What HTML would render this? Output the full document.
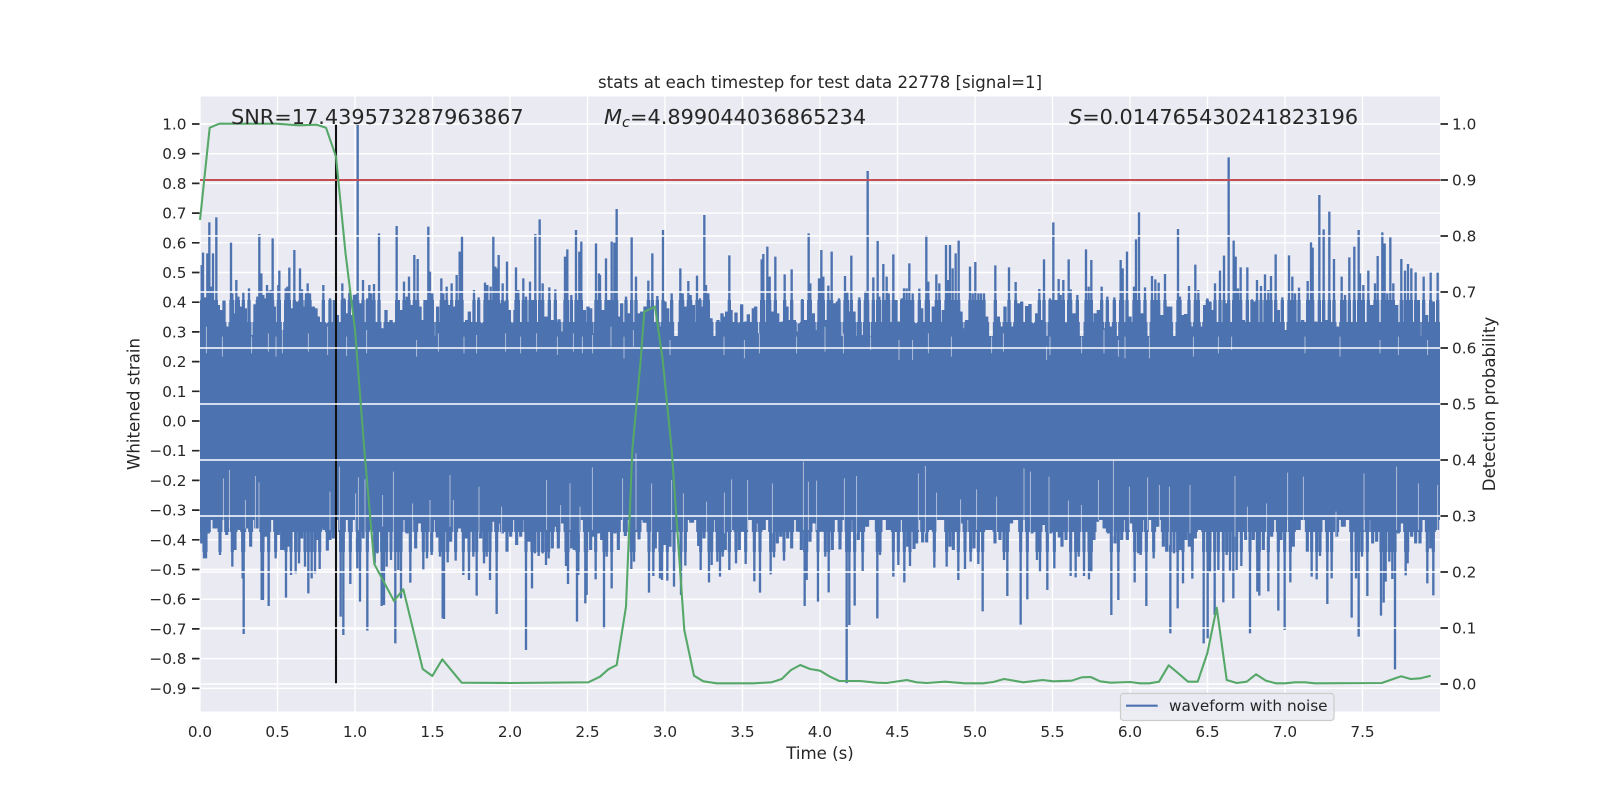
<!DOCTYPE html>
<html><head><meta charset="utf-8"><title>stats</title>
<style>
html,body{margin:0;padding:0;background:#fff;width:1600px;height:800px;overflow:hidden}
svg{display:block}
text{font-family:"DejaVu Sans","Liberation Sans",sans-serif;fill:#262626}
.t{font-size:15.28px}
.l{font-size:16.6px}
.b{font-size:20.83px}
</style></head><body>
<svg width="1600" height="800" viewBox="0 0 1600 800" xmlns="http://www.w3.org/2000/svg">
<defs>
<clipPath id="c"><rect x="200" y="96.5" width="1240" height="615"/></clipPath>
<clipPath id="t1"><rect x="200" y="300" width="1240" height="60"/></clipPath>
<clipPath id="t2"><rect x="200" y="322" width="1240" height="40"/></clipPath>
<clipPath id="b1"><rect x="200" y="500" width="1240" height="52"/></clipPath>
<clipPath id="b2"><rect x="200" y="500" width="1240" height="32"/></clipPath>
<g id="sp" fill="none" stroke="#4c72b0">
<path transform="translate(100,60) scale(.33333)" d="M305 900V615M309 900V578M315 900V712M322 900V580M328 900V487M333 900V680M339 900V580M345 900V735M349 900V472M355 900V735M362 900V750M372 900V722M380 900V800M386 900V830M393 900V548M397 900V700M403 900V760M409 900V660M415 900V710M423 900V740M430 900V695M436 900V745M447 900V685M453 900V825M459 900V870M465 900V733M472 900V710M478 900V522M484 900V640M490 900V705M495 900V715M501 900V675M508 900V692M513 900V690M518 900V535M523 900V740M530 900V830M535 900V675M538 900V632M545 900V810M550 900V820M557 900V685M562 900V680M568 900V623M575 900V745M583 900V570M590 900V725M600 900V625M606 900V688M612 900V740M618 900V700M623 900V670M630 900V700M640 900V740M648 900V745M655 900V770M662 900V835M670 900V675M677 900V790M683 900V880M690 900V715M697 900V800M703 900V720M712 900V765M720 900V850M727 900V670M733 900V715M740 900V760M748 900V692M755 900V765M762 900V705M767 900V703M773 900V195M780 900V730M789 900V660M795 900V820M802 900V715M808 900V675M814 900V700M822 900V672M828 900V800M837 900V520M845 900V805M852 900V820M858 900V750M866 900V810M873 900V780M880 900V790M890 900V498M895 900V720M905 900V750M912 900V665M920 900V710M927 900V650M935 900V735M943 900V585M953 900V597M960 900V740M968 900V780M975 900V720M985 900V500M990 900V635M997 900V700M1005 900V830M1013 900V740M1024 900V655M1030 900V700M1040 900V680M1048 900V735M1055 900V670M1063 900V740M1070 900V645M1079 900V575M1086 900V527M1093 900V830M1100 900V780M1108 900V755M1115 900V790M1122 900V690M1130 900V800M1136 900V712M1145 900V790M1155 900V668M1162 900V675M1172 900V680M1180 900V530M1186 900V620M1190 900V625M1196 900V585M1203 900V730M1208 900V670M1214 900V725M1221 900V605M1228 900V750M1236 900V790M1245 900V750M1248 900V622M1255 900V690M1262 900V800M1270 900V655M1278 900V710M1290 900V665M1300 900V720M1306 900V522M1319 900V478M1328 900V670M1338 900V770M1348 900V682M1358 900V780M1366 900V688M1377 900V778M1385 900V815M1395 900V590M1402 900V568M1414 900V705M1428 900V510M1438 900V575M1444 900V545M1453 900V750M1464 900V740M1472 900V745M1480 900V820M1488 900V550M1497 900V640"/>
<path transform="translate(600,60) scale(.33333)" d="M0 900V645M8 900V750M18 900V595M25 900V720M35 900V545M43 900V548M50 900V447M58 900V770M65 900V730M78 900V710M86 900V760M95 900V532M102 900V800M108 900V650M116 900V760M125 900V755M135 900V740M145 900V662M150 900V740M157 900V580M165 900V790M172 900V708M180 900V800M189 900V510M195 900V725M203 900V745M215 900V700M224 900V830M232 900V832M241 900V625M248 900V700M258 900V740M265 900V663M272 900V705M280 900V735M291 900V647M300 900V715M307 900V740M313 900V465M318 900V675M325 900V700M333 900V775M340 900V835M347 900V835M354 900V780M360 900V830M366 900V760M375 900V770M380 900V755M388 900V586M393 900V750M408 900V758M415 900V790M425 900V733M437 900V785M445 900V763M453 900V860M460 900V745M467 900V740M477 900V820M485 900V598M490 900V582M502 900V560M509 900V650M518 900V755M526 900V590M533 900V760M540 900V845M548 900V785M554 900V643M561 900V740M567 900V780M575 900V628M583 900V780M590 900V815M600 900V790M607 900V717M617 900V780M626 900V520M631 900V670M640 900V760M650 900V810M657 900V655M664 900V570M670 900V650M677 900V780M685 900V677M695 900V575M705 900V730M712 900V725M717 900V715M725 900V850M735 900V648M742 900V695M748 900V755M754 900V587M762 900V755M770 900V850M778 900V712M788 900V825M796 900V693M803 900V333M812 900V830M820 900V652M833 900V543M838 900V710M850 900V612M860 900V650M866 900V700M880 900V583M888 900V720M895 900V785M905 900V715M912 900V685M920 900V685M928 900V610M938 900V700M948 900V790M958 900V686M965 900V745M971 900V820M979 900V525M985 900V665M993 900V830M1000 900V740M1009 900V643M1018 900V670M1030 900V750M1038 900V555M1043 900V660M1050 900V555M1058 900V625M1067 900V580M1076 900V542M1083 900V755M1092 900V805M1100 900V780M1110 900V620M1118 900V700M1126 900V606M1135 900V700M1143 900V700M1152 900V700M1160 900V770M1170 900V855M1186 900V616M1195 900V770M1205 900V800M1215 900V740M1227 900V622M1235 900V800M1247 900V666M1255 900V730M1265 900V725M1280 900V738M1290 900V732M1300 900V790M1310 900V760M1318 900V687M1325 900V780M1332 900V598M1340 900V860M1350 900V715M1360 900V487M1367 900V720M1376 900V657M1382 900V705M1390 900V660M1397 900V790M1406 900V598M1412 900V688M1422 900V760M1432 900V705M1445 900V830M1458 900V568M1466 900V680M1474 900V600M1485 900V760M1495 900V750"/>
<path transform="translate(1050,60) scale(.33333)" d="M155 900V680M163 900V805M172 900V710M184 900V800M193 900V712M203 900V850M212 900V600M218 900V625M231 900V575M240 900V770M252 900V680M258 900V538M267 900V457M276 900V760M285 900V682M295 900V830M306 900V648M316 900V658M326 900V668M335 900V765M345 900V642M352 900V740M362 900V740M372 900V830M384 900V507M390 900V710M400 900V765M407 900V762M417 900V678M425 900V800M436 900V614M445 900V690M455 900V800M464 900V735M472 900V715M480 900V725M488 900V750M495 900V670M510 900V632M522 900V587M530 900V730M536 900V292M544 900V820M551 900V542M557 900V590M564 900V685M572 900V622M580 900V780M592 900V622M600 900V800M606 900V718M614 900V725M621 900V660M633 900V678M645 900V643M655 900V690M663 900V648M677 900V583M685 900V750M697 900V712M705 900V810M717 900V586M727 900V650M735 900V700M747 900V683M758 900V780M773 900V663M783 900V547M788 900V563M797 900V785M808 900V405M821 900V508M830 900V780M838 900V455M852 900V597M860 900V800M875 900V650M885 900V705M898 900V592M905 900V820M913 900V560M926 900V510M930 900V640M940 900V675M955 900V632M965 900V735M975 900V670M983 900V588M997 900V517M1004 900V550M1012 900V700M1021 900V532M1030 900V670M1040 900V735M1054 900V597M1065 900V632M1074 900V612M1084 900V625M1097 900V637M1105 900V720M1121 900V650M1130 900V765M1142 900V638M1150 900V725M1163 900V638"/>
<path transform="translate(100,450) scale(.33333)" d="M305 180V280M312 180V325M318 180V325M325 180V250M335 180V205M345 180V235M352 180V230M360 180V315M380 180V255M390 180V190M397 180V350M405 180V300M415 180V240M428 180V385M431 180V552M442 180V235M452 180V290M470 180V235M485 180V450M489 180V450M497 180V260M506 180V468M527 180V325M535 180V255M545 180V300M552 180V300M558 180V443M566 180V290M573 180V375M580 180V220M587 180V370M597 180V340M605 180V265M615 180V350M625 180V430M635 180V385M645 180V370M652 180V270M659 180V357M667 180V235M675 180V240M682 180V302M690 180V270M700 180V265M722 180V500M730 180V555M740 180V200M751 180V402M760 180V190M772 180V355M780 180V455M790 180V265M802 180V542M812 180V240M824 180V340M832 180V310M845 180V468M852 180V465M860 180V350M873 180V330M886 180V580M895 180V360M903 180V445M912 180V200M921 180V250M931 180V398M947 180V295M955 180V220M970 180V358M981 180V325M995 180V315M1003 180V210M1012 180V262M1020 180V320M1028 180V505M1032 180V507M1043 180V337M1052 180V275M1067 180V332M1077 180V235M1090 180V375M1098 180V265M1107 180V390M1115 180V215M1120 180V320M1130 180V437M1142 180V265M1152 180V340M1160 180V320M1170 180V390M1180 180V215M1190 180V492M1198 180V220M1207 180V250M1221 180V305M1232 180V260M1250 180V285M1262 180V260M1278 180V600M1287 180V275M1296 180V415M1305 180V310M1316 180V318M1328 180V310M1338 180V345M1346 180V325M1357 180V295M1368 180V230M1375 180V295M1385 180V220M1398 180V348M1404 180V402M1415 180V295M1423 180V300M1431 180V515M1435 180V375M1456 180V460M1460 180V435M1472 180V300M1480 180V260M1487 180V388M1495 180V250"/>
<path transform="translate(600,450) scale(.33333)" d="M5 180V270M12 180V537M20 180V320M35 180V415M45 180V250M55 180V300M65 180V200M76 180V258M85 180V200M94 180V357M102 180V335M117 180V268M135 180V218M147 180V428M160 180V378M166 180V295M172 180V240M180 180V385M186 180V390M193 180V285M202 180V392M210 180V290M222 180V410M232 180V240M243 180V435M256 180V347M275 180V218M285 180V205M296 180V288M302 180V360M312 180V265M327 180V397M335 180V345M345 180V190M352 180V335M360 180V380M368 180V320M376 180V300M388 180V360M400 180V240M408 180V340M418 180V300M428 180V245M437 180V342M449 180V185M463 180V394M470 180V220M480 180V428M490 180V240M503 180V190M512 180V373M522 180V322M532 180V280M542 180V260M552 180V332M563 180V265M575 180V295M585 180V210M595 180V245M604 180V300M614 180V468M620 180V390M630 180V275M645 180V220M654 180V455M665 180V245M676 180V320M686 180V427M697 180V300M720 180V298M730 180V190M740 180V700M748 180V525M764 180V467M775 180V270M788 180V363M800 180V230M812 180V195M832 180V505M840 180V315M850 180V205M865 180V240M880 180V380M895 180V345M905 180V205M913 180V397M923 180V290M930 180V348M942 180V297M950 180V280M968 180V277M980 180V277M990 180V240M1003 180V353M1030 180V205M1040 180V350M1050 180V290M1060 180V300M1075 180V390M1085 180V220M1095 180V357M1103 180V200M1112 180V335M1122 180V295M1135 180V342M1148 180V484M1160 180V240M1172 180V240M1185 180V280M1200 180V270M1212 180V330M1222 180V438M1232 180V220M1244 180V205M1262 180V524M1282 180V448M1296 180V250M1311 180V330M1320 180V368M1330 180V225M1342 180V420M1352 180V250M1363 180V355M1378 180V262M1386 180V290M1398 180V270M1412 180V378M1427 180V382M1436 180V320M1452 180V378M1467 180V388M1474 180V365M1482 180V270M1490 180V215"/>
<path transform="translate(1050,450) scale(.33333)" d="M153 180V200M165 180V235M175 180V250M184 180V495M195 180V280M205 180V450M215 180V270M232 180V270M243 180V220M254 180V397M265 180V310M272 180V315M289 180V468M300 180V185M311 180V325M322 180V230M340 180V290M350 180V305M361 180V550M372 180V310M383 180V475M391 180V300M399 180V400M408 180V270M418 180V290M427 180V386M436 180V265M450 180V240M461 180V580M473 180V565M480 180V365M494 180V495M505 180V360M520 180V457M530 180V315M540 180V362M550 180V445M560 180V360M574 180V348M587 180V270M600 180V550M610 180V270M622 180V425M628 180V437M640 180V300M655 180V424M665 180V260M685 180V482M693 180V270M704 180V540M721 180V397M730 180V290M745 180V240M772 180V305M785 180V380M800 180V388M810 180V318M832 180V462M845 180V385M860 180V260M880 180V230M905 180V503M918 180V385M926 180V560M936 180V320M952 180V438M968 180V280M980 180V275M993 180V497M1001 180V458M1007 180V395M1018 180V335M1027 180V387M1035 180V658M1045 180V250M1055 180V220M1067 180V376M1073 180V340M1085 180V260M1097 180V280M1110 180V280M1132 180V400M1142 180V295M1150 180V436M1160 180V240"/>
</g>
</defs>
<rect x="200" y="96.5" width="1240" height="615" fill="#eaeaf2"/>
<g stroke="#fff" stroke-width="1.39" fill="none">
<path d="M200 124H1440M200 153.7H1440M200 183.4H1440M200 213.1H1440M200 242.8H1440M200 272.5H1440M200 302.2H1440M200 331.9H1440M200 361.6H1440M200 391.3H1440M200 421H1440M200 450.7H1440M200 480.4H1440M200 510.1H1440M200 539.8H1440M200 569.5H1440M200 599.2H1440M200 628.9H1440M200 658.6H1440M200 688.3H1440"/>
<path d="M200 96.5V711.5M277.5 96.5V711.5M355 96.5V711.5M432.5 96.5V711.5M510 96.5V711.5M587.5 96.5V711.5M665 96.5V711.5M742.5 96.5V711.5M820 96.5V711.5M897.5 96.5V711.5M975 96.5V711.5M1052.5 96.5V711.5M1130 96.5V711.5M1207.5 96.5V711.5M1285 96.5V711.5M1362.5 96.5V711.5"/>
</g>
<g clip-path="url(#c)">
<rect x="200" y="336" width="1240" height="184" fill="#4c72b0"/>
<use href="#sp" stroke-width="7"/>
<g clip-path="url(#t1)"><use href="#sp" stroke-width="10"/></g>
<g clip-path="url(#t2)"><use href="#sp" stroke-width="15"/></g>
<g clip-path="url(#b1)"><use href="#sp" stroke-width="9.5"/></g>
<g clip-path="url(#b2)"><use href="#sp" stroke-width="15"/></g>
<g fill="none" stroke="#e3e5ef" stroke-width="2.4" opacity=".8">
<path transform="translate(100,60) scale(.33333)" d="M319 800V880M367 830V890M455 830V880M505 820V875M528 830V890M547 810V880M625 820V875M683 800V885M740 830V888M800 810V880M950 840V890M1015 820V875M1092 830V880M1130 825V880M1217 820V875M1262 830V880M1310 820V875M1372 830V885M1420 820V875M1447 830V880M1478 825V880"/>
<path transform="translate(600,60) scale(.33333)" d="M33 800V860M72 830V895M100 810V860M210 840V885M372 830V885M433 840V895M478 820V880M590 830V880M675 800V875M730 820V880M812 830V870M897 840V900M938 840V900M985 820V880M1054 830V890M1175 830V880M1210 820V875M1340 860V900M1350 830V885M1445 830V880"/>
<path transform="translate(1050,60) scale(.33333)" d="M162 810V880M205 840V890M225 830V895M298 830V895M430 830V890M505 830V880M545 830V870M765 830V880M870 830V890M990 840V880M1045 830V885M1133 840V885"/>
<path transform="translate(100,450) scale(.33333)" d="M370 85V250M388 60V235M436 150V235M466 78V240M477 97V240M690 125V240M718 50V240M767 130V265M775 82V240M795 88V265M848 135V230M880 65V260M938 160V250M990 150V250M1050 75V230M1060 150V250M1137 110V250M1205 170V250M1340 90V240M1382 165V250M1410 100V240M1440 170V250M1477 52V240"/>
<path transform="translate(600,450) scale(.33333)" d="M68 85V215M108 10V240M155 100V250M215 90V240M250 130V260M320 155V260M373 128V250M395 88V240M443 90V240M517 100V250M610 35V240M625 95V240M650 92V240M733 85V250M770 78V250M955 70V240M976 48V250M1010 128V250M1082 148V260M1130 118V240M1190 140V250M1272 55V250M1291 65V250M1347 80V250M1405 152V250M1444 165V260"/>
<path transform="translate(1050,450) scale(.33333)" d="M145 90V210M190 30V260M238 110V240M293 82V240M328 105V240M358 110V285M420 105V250M555 78V260M592 170V260M650 160V260M713 68V240M760 80V240M858 185V260M942 70V240M1040 50V240M1105 100V240M1163 105V240"/>
</g>
</g>
<path d="M336 124V684" stroke="#111" stroke-width="2.08" fill="none"/>
<path d="M200 348H1440M200 404H1440M200 460H1440M200 516H1440M200 124H1440M200 180H1440M200 236H1440M200 292H1440M200 572H1440M200 628H1440M200 684H1440" stroke="#fff" stroke-width="1.39" fill="none"/>
<path d="M200 180H1440" stroke="#c44e52" stroke-width="2.08" fill="none"/>
<path d="M200 220L209.7 127.7L219.3 123.7L276.7 123.7L298.3 125.3L316.7 124.7L326 127.7L336 156.7L345.5 253L355 330L364.5 452L374.3 564L394 601L403.3 589.3L422.7 669L432.3 676L442.3 659.3L461.7 682.7L510 683L588.3 682.3L600 676.7L608.3 669.3L616.7 665L626 606.7L632.3 450L640.7 360L644.3 311.7L655 306.7L662.7 360L671.7 450L684.3 630L694 675.7L703.3 681.3L716.7 683.3L753.3 683.3L771.7 682.3L781.7 679L791 670L800.3 665L810 669L820 670.7L830 676.7L839.3 681L860 681L876.7 682.7L886.7 683L906.7 680L916.7 682.3L926.7 683L945 681.7L965 683.3L983.3 683.3L993.3 682L1004 679L1023.3 682.3L1042.7 680L1053.3 681.3L1071.7 680.7L1081.7 677.3L1090.7 677L1100 681.3L1110.7 682.7L1130 682L1140 683.3L1149.3 683.3L1159 681.7L1168.7 665.3L1178.3 673.3L1188 681.7L1197.7 681.7L1207.3 653.3L1216.7 607.7L1226.7 680L1236.7 683L1246.7 681.7L1256 674.3L1266 680.7L1275.7 683.3L1285 683.3L1295 682.3L1305 682.3L1315 683.3L1381.7 683L1401 676.3L1410.7 679L1420.7 678.3L1430.7 675.7" stroke="#55a868" stroke-width="2.08" fill="none" stroke-linejoin="round"/>
<path d="M192 124H199.5M192 153.7H199.5M192 183.4H199.5M192 213.1H199.5M192 242.8H199.5M192 272.5H199.5M192 302.2H199.5M192 331.9H199.5M192 361.6H199.5M192 391.3H199.5M192 421H199.5M192 450.7H199.5M192 480.4H199.5M192 510.1H199.5M192 539.8H199.5M192 569.5H199.5M192 599.2H199.5M192 628.9H199.5M192 658.6H199.5M192 688.3H199.5M1440.5 124H1448M1440.5 180H1448M1440.5 236H1448M1440.5 292H1448M1440.5 348H1448M1440.5 404H1448M1440.5 460H1448M1440.5 516H1448M1440.5 572H1448M1440.5 628H1448M1440.5 684H1448" stroke="#262626" stroke-width="1.7" fill="none"/>
<g class="t" text-anchor="end">
<text x="186.5" y="129.5">1.0</text><text x="186.5" y="159.2">0.9</text><text x="186.5" y="188.9">0.8</text><text x="186.5" y="218.6">0.7</text><text x="186.5" y="248.3">0.6</text><text x="186.5" y="278">0.5</text><text x="186.5" y="307.7">0.4</text><text x="186.5" y="337.4">0.3</text><text x="186.5" y="367.1">0.2</text><text x="186.5" y="396.8">0.1</text><text x="186.5" y="426.5">0.0</text><text x="186.5" y="456.2">−0.1</text><text x="186.5" y="485.9">−0.2</text><text x="186.5" y="515.6">−0.3</text><text x="186.5" y="545.3">−0.4</text><text x="186.5" y="575">−0.5</text><text x="186.5" y="604.7">−0.6</text><text x="186.5" y="634.4">−0.7</text><text x="186.5" y="664.1">−0.8</text><text x="186.5" y="693.8">−0.9</text>
</g>
<g class="t">
<text x="1452" y="129.5">1.0</text><text x="1452" y="185.5">0.9</text><text x="1452" y="241.5">0.8</text><text x="1452" y="297.5">0.7</text><text x="1452" y="353.5">0.6</text><text x="1452" y="409.5">0.5</text><text x="1452" y="465.5">0.4</text><text x="1452" y="521.5">0.3</text><text x="1452" y="577.5">0.2</text><text x="1452" y="633.5">0.1</text><text x="1452" y="689.5">0.0</text>
</g>
<g class="t" text-anchor="middle">
<text x="200" y="737">0.0</text><text x="277.5" y="737">0.5</text><text x="355" y="737">1.0</text><text x="432.5" y="737">1.5</text><text x="510" y="737">2.0</text><text x="587.5" y="737">2.5</text><text x="665" y="737">3.0</text><text x="742.5" y="737">3.5</text><text x="820" y="737">4.0</text><text x="897.5" y="737">4.5</text><text x="975" y="737">5.0</text><text x="1052.5" y="737">5.5</text><text x="1130" y="737">6.0</text><text x="1207.5" y="737">6.5</text><text x="1285" y="737">7.0</text><text x="1362.5" y="737">7.5</text>
</g>
<text class="l" x="820" y="88" text-anchor="middle">stats at each timestep for test data 22778 [signal=1]</text>
<text class="l" x="820" y="759" text-anchor="middle">Time (s)</text>
<text class="l" transform="translate(139.5,404) rotate(-90)" text-anchor="middle">Whitened strain</text>
<text class="l" transform="translate(1495,404) rotate(-90)" text-anchor="middle">Detection probability</text>
<text class="b" x="231" y="124">SNR=17.439573287963867</text>
<text class="b" x="604" y="124"><tspan font-style="italic">M</tspan><tspan font-style="italic" font-size="14.6" dy="3">c</tspan><tspan dy="-3">=4.899044036865234</tspan></text>
<text class="b" x="1069" y="124"><tspan font-style="italic">S</tspan>=0.014765430241823196</text>
<rect x="1120.5" y="693.5" width="213.5" height="27" rx="3" fill="#eaeaf2" fill-opacity=".85" stroke="#ccc" stroke-width="1.2"/>
<path d="M1126 705.7H1157.7" stroke="#4c72b0" stroke-width="2.08" fill="none"/>
<text class="t" x="1169" y="711">waveform with noise</text>
</svg>
</body></html>
